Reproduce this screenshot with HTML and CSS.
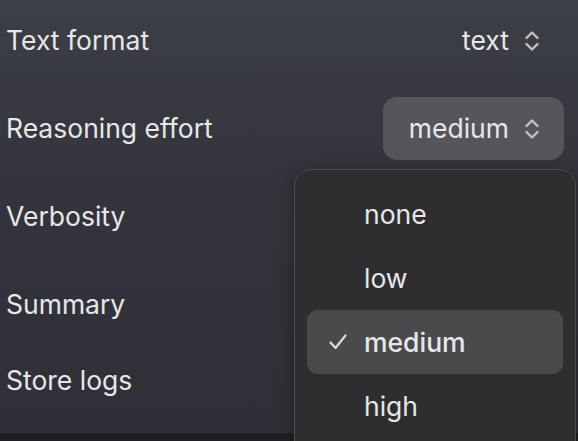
FILE: index.html
```html
<!DOCTYPE html>
<html>
<head>
<meta charset="utf-8">
<link rel="stylesheet" href="styles.css">
</head>
<body>
<div class="panel">
  <div class="rows">
    <div class="row">
      <span class="label">Text format</span>
      <div class="select">
        <span>text</span>
        <svg class="chev" viewBox="0 0 16 24" width="16" height="24"><path d="M2.5 9 L8 3.5 L13.5 9 M2.5 15 L8 20.5 L13.5 15" fill="none" stroke="currentColor" stroke-width="2.4" stroke-linecap="round" stroke-linejoin="round"/></svg>
      </div>
    </div>
    <div class="row">
      <span class="label">Reasoning effort</span>
      <div class="select active">
        <span>medium</span>
        <svg class="chev" viewBox="0 0 16 24" width="16" height="24"><path d="M2.5 9 L8 3.5 L13.5 9 M2.5 15 L8 20.5 L13.5 15" fill="none" stroke="currentColor" stroke-width="2.4" stroke-linecap="round" stroke-linejoin="round"/></svg>
      </div>
    </div>
    <div class="row"><span class="label">Verbosity</span></div>
    <div class="row"><span class="label">Summary</span></div>
    <div class="row last"><span class="label">Store logs</span></div>
  </div>
  <div class="footer"></div>
  <div class="menu">
    <div class="item"><span class="check"></span><span>none</span></div>
    <div class="item"><span class="check"></span><span>low</span></div>
    <div class="item selected">
      <span class="check"><svg viewBox="0 0 18 16" width="18" height="16"><path d="M1.5 8.5 L6.5 14 L16.5 1.5" fill="none" stroke="currentColor" stroke-width="2.2" stroke-linecap="round" stroke-linejoin="round"/></svg></span>
      <span>medium</span>
    </div>
    <div class="item"><span class="check"></span><span>high</span></div>
  </div>
</div>
</body>
</html>
```
FILE: styles.css
```css
html, body {
  margin: 0;
  padding: 0;
}
body {
  width: 578px;
  height: 441px;
  overflow: hidden;
  font-family: Inter, "Noto Sans", sans-serif;
  color: #e7e7ea;
}
.panel {
  position: relative;
  width: 578px;
  height: 441px;
  overflow: hidden;
  background: linear-gradient(180deg, #3d3f46 0%, #34353c 40%, #2f3037 100%);
  display: flex;
  flex-direction: column;
}
.rows {
  flex: 1;
  display: flex;
  flex-direction: column;
  gap: 24px;
  padding: 8px 14px 0 6px;
}
.row {
  height: 64px;
  display: flex;
  align-items: center;
  justify-content: space-between;
}
.row.last {
  margin-top: -12px;
}
.label {
  font-size: 26.5px;
}
.select {
  height: 63px;
  display: flex;
  align-items: center;
  gap: 15px;
  padding: 0 24px 0 26px;
  border-radius: 14px;
  font-size: 26.5px;
}
.select.active {
  background: #55565b;
}
.chev {
  color: #c2c2c6;
  margin-top: 1px;
}
.footer {
  height: 8px;
  background: #1f2023;
}
.menu {
  position: absolute;
  left: 294px;
  top: 169px;
  width: 256px;
  height: 290px;
  padding: 12px 12px;
  background: #2e2e30;
  border: 1px solid #4d4d51;
  border-radius: 17px;
  box-shadow: 0 4px 18px rgba(0,0,0,0.35);
}
.item {
  height: 64px;
  display: flex;
  align-items: center;
  border-radius: 11px;
  font-size: 26.5px;
}
.check {
  width: 57px;
  display: flex;
  justify-content: flex-end;
  padding-right: 17px;
  box-sizing: border-box;
  color: #dcdcde;
}
.item.selected {
  background: #4a4a4d;
  font-weight: 500;
}
```
